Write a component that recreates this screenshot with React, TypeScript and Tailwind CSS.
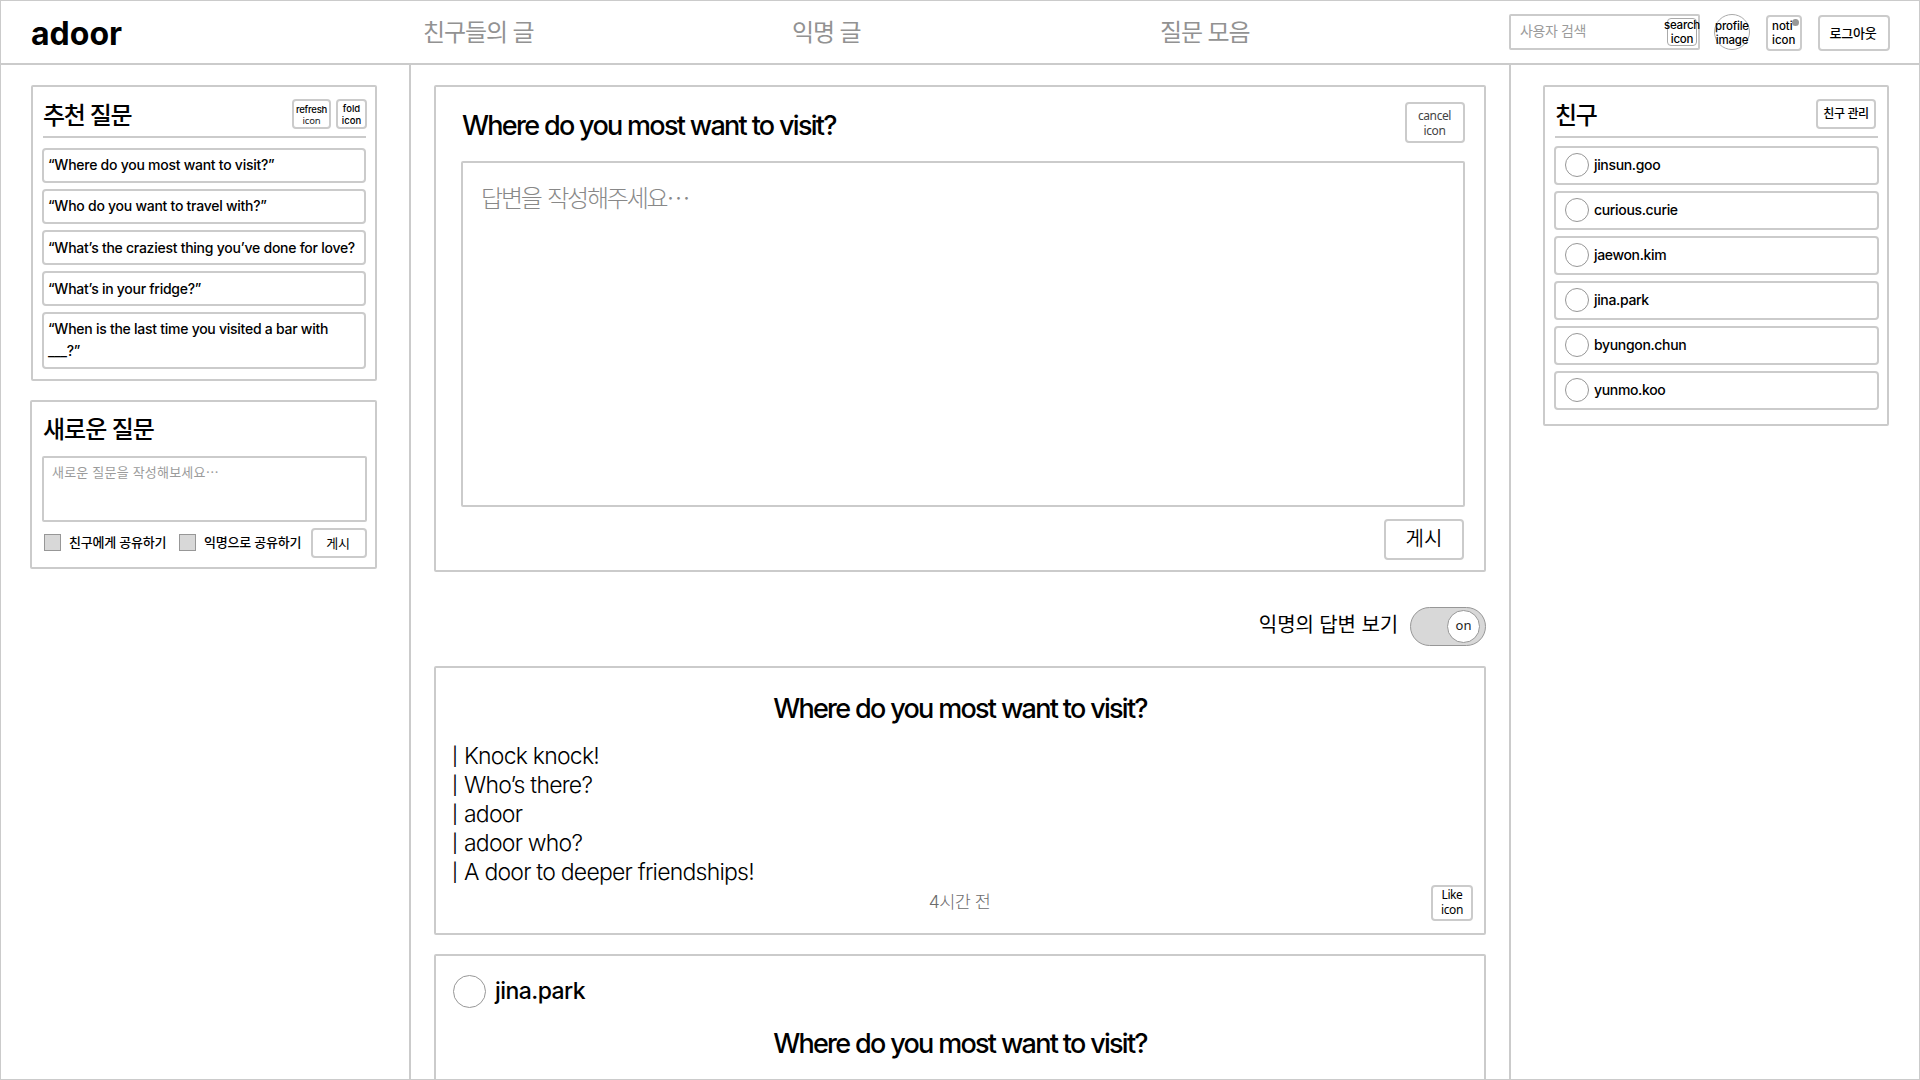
import React from "react";

const suggestions = [
  { text: "“Where do you most want to visit?”", line: "leading-[30px]" },
  { text: "“Who do you want to travel with?”", line: "leading-[30px]" },
  { text: "“What’s the craziest thing you’ve done for love?", line: "leading-[32px]" },
  { text: "“What’s in your fridge?”", line: "leading-[32px]" },
];

const friends = ["jinsun.goo", "curious.curie", "jaewon.kim", "jina.park", "byungon.chun", "yunmo.koo"];

const answerLines = ["Knock knock!", "Who’s there?", "adoor", "adoor who?", "A door to deeper friendships!"];

function QuestionTitle({ className = "" }: { className?: string }) {
  return (
    <h2 className={`whitespace-nowrap text-[27px] font-medium leading-[32px] tracking-[-1.74px] [word-spacing:0.2px] ${className}`}>
      Where do you most want to visit?
    </h2>
  );
}

function Header() {
  return (
    <header className="flex h-[65px] shrink-0 items-start border-b-2 border-[#cbcbcb] border-t border-t-[#cbcbcb]">
      <div className="ml-[30px] mt-[13px] w-[392px] text-[32px] font-bold leading-[40px] tracking-[0px]">adoor</div>
      <nav className="mt-[16px] flex text-[24px] leading-[32px] tracking-[-1.1px] text-[#929292]">
        <a className="w-[369px]">친구들의 글</a>
        <a className="w-[368px]">익명 글</a>
        <a className="w-[349px]">질문 모음</a>
      </nav>
      <div className="mt-[13px] flex h-[36px] w-[191px] rounded-[2px] border-2 border-[#cbcbcb] pl-[9px]">
        <span className="w-[147px] whitespace-nowrap text-[14px] leading-[30px] tracking-[-0.4px] text-[#9b9b9b]">사용자 검색</span>
        <button className="mt-[2px] flex h-[28px] w-[30px] shrink-0 flex-col items-center justify-center whitespace-nowrap rounded-[4px] border border-[#aaa] text-[11.5px] font-medium leading-[14px] tracking-[-0.2px]">
          <span>search</span>
          <span>icon</span>
        </button>
      </div>
      <div className="ml-[14px] mt-[13px] flex size-[36px] flex-col items-center justify-center whitespace-nowrap rounded-full border border-[#aaa] text-[11.5px] font-medium leading-[14px] tracking-[-0.2px]">
        <span className="mt-px">profile</span>
        <span>image</span>
      </div>
      <button className="relative ml-[16px] mt-[14px] flex h-[36px] w-[36px] flex-col items-start justify-center rounded-[4px] border-2 border-[#cbcbcb] pl-[4px] text-[11.5px] font-medium leading-[14px]">
        <span>noti</span>
        <span>icon</span>
        <i className="absolute right-[1px] top-[2px] size-[7px] rounded-full bg-[#979797]" />
      </button>
      <button className="ml-[16px] mt-[14px] h-[36px] w-[72px] rounded-[4px] border-2 border-[#cbcbcb] pr-[2px] text-[13px] font-medium leading-[32px] tracking-[-0.2px]">
        로그아웃
      </button>
    </header>
  );
}

function SuggestedQuestions() {
  return (
    <section className="ml-[1px] h-[296px] rounded-[2px] border-2 border-[#cbcbcb] px-[9px] pt-[12px]">
      <div className="ml-px flex h-[39px] justify-between border-b-2 border-[#cbcbcb]">
        <h2 className="mt-px text-[24px] font-medium leading-[32px] tracking-[-1.3px]">추천 질문</h2>
        <div className="-mr-px flex gap-[5px] text-[9.5px] font-medium leading-[11px]">
          <button className="flex h-[30px] w-[39px] flex-col items-center justify-center whitespace-nowrap rounded-[4px] border-2 border-[#cbcbcb] tracking-[-0.2px]">
            <span className="mt-px">refresh</span>
            <span className="font-['Noto_Sans'] font-normal text-[#222]">icon</span>
          </button>
          <button className="flex h-[30px] w-[31px] flex-col items-center rounded-[4px] border-2 border-[#cbcbcb] pt-[2px] leading-[12px]">
            <span>fold</span>
            <span>icon</span>
          </button>
        </div>
      </div>
      <ul className="mt-[10px] flex flex-col gap-[6px] text-[14px] font-medium tracking-[-0.26px]">
        {suggestions.map((q) => (
          <li key={q.text} className={`h-[35px] whitespace-nowrap rounded-[4px] border-2 border-[#cbcbcb] pl-[4px] ${q.line}`}>
            {q.text}
          </li>
        ))}
        <li className="h-[57px] whitespace-nowrap rounded-[4px] border-2 border-[#cbcbcb] pl-[4px] pt-[4px] leading-[22px]">
          “When is the last time you visited a bar with
          <br />
          ___?”
        </li>
      </ul>
    </section>
  );
}

function NewQuestion() {
  return (
    <section className="mt-[19px] h-[169px] rounded-[2px] border-2 border-[#cbcbcb] pl-[10px] pr-[8px] pt-[12px]">
      <h2 className="ml-px text-[24px] font-medium leading-[32px] tracking-[-1px]">새로운 질문</h2>
      <div className="mt-[10px] h-[66px] rounded-[2px] border-2 border-[#cbcbcb] pl-[8px] pt-[4px] text-[13px] leading-[20px] tracking-[0.2px] text-[#9b9b9b]">
        새로운 질문을 작성해보세요<span className="font-['Noto_Sans_CJK_KR']">…</span>
      </div>
      <div className="mt-[6px] flex h-[30px] items-start whitespace-nowrap pl-[2px] text-[13px] font-medium leading-[28px]">
        <i className="mr-[8px] mt-[6px] size-[17px] shrink-0 border border-[#979797] bg-[#d8d8d8]" />
        <span className="w-[110px] tracking-[-0.2px]">친구에게 공유하기</span>
        <i className="mr-[8px] mt-[6px] size-[17px] shrink-0 border border-[#979797] bg-[#d8d8d8]" />
        <span className="w-[107px] tracking-[-0.2px]">익명으로 공유하기</span>
        <button className="h-[30px] w-[56px] shrink-0 rounded-[4px] border-2 border-[#cbcbcb] pr-[2px] font-normal leading-[24px] tracking-[-0.1px]">게시</button>
      </div>
    </section>
  );
}

function Composer() {
  return (
    <section className="h-[487px] rounded-[2px] border-2 border-[#cbcbcb] pl-[25px] pr-[19px] pt-[15px]">
      <div className="flex h-[59px] justify-between">
        <QuestionTitle className="ml-px mt-[8px]" />
        <button className="flex h-[41px] w-[60px] flex-col items-center justify-center rounded-[4px] border-2 border-[#cbcbcb] pr-px font-['Noto_Sans'] text-[12px] leading-[15px] tracking-[-0.4px] text-[#444]">
          <span>cancel</span>
          <span>icon</span>
        </button>
      </div>
      <div className="h-[346px] rounded-[2px] border-2 border-[#cbcbcb] pl-[18px] pt-[18px] text-[24px] font-light leading-[32px] tracking-[-2.2px] [word-spacing:2px] text-[#888]">
        답변을 작성해주세요<span className="font-['Noto_Sans_CJK_KR']">…</span>
      </div>
      <button className="ml-auto mr-px mt-[12px] block h-[41px] w-[80px] rounded-[4px] border-2 border-[#cbcbcb] text-[20px] font-[350] leading-[35px]">게시</button>
    </section>
  );
}

function Feed() {
  return (
    <>
      <div className="mt-[35px] flex h-[39px] items-center justify-end">
        <span className="-mt-[4px] mr-[12px] text-[20px] leading-[32px] tracking-[-0.1px]">익명의 답변 보기</span>
        <div className="flex h-[39px] w-[76px] items-center justify-end rounded-full border border-[#979797] bg-[#d8d8d8] pr-[5px]">
          <div className="h-[33px] w-[33px] rounded-full border border-[#979797] bg-white text-center font-['Noto_Sans'] text-[13px] leading-[29px] text-[#222]">on</div>
        </div>
      </div>
      <article className="mt-[20px] flex h-[269px] flex-col rounded-[2px] border-2 border-[#cbcbcb] px-[18px] pt-[25px]">
        <QuestionTitle className="text-center" />
        <div className="mt-[17px] text-[23px] font-light leading-[29px] tracking-[-0.78px]">
          {answerLines.map((line) => (
            <p key={line} className="flex">
              <span className="-ml-[2px] w-[12px] text-[18px] font-normal">|</span>
              {line}
            </p>
          ))}
        </div>
        <div className="relative text-center text-[17.5px] font-light leading-[30px] tracking-[-0.5px] text-[#6c6c6c]">
          <span className="mr-px">4시간 전</span>
          <button className="absolute -right-[7px] -top-[2px] flex h-[36px] w-[42px] flex-col items-center rounded-[4px] border-2 border-[#cbcbcb] font-['Noto_Sans'] text-[12px] font-normal leading-[15px] tracking-[-0.4px] text-black">
            <span>Like</span>
            <span>icon</span>
          </button>
        </div>
      </article>
      <article className="mt-[19px] h-[300px] rounded-[2px] border-2 border-[#cbcbcb] px-[16px] pt-[18px]">
        <div className="flex h-[34px] items-center gap-[9px] pl-px text-[23px] font-medium leading-[32px] tracking-[-0.55px]">
          <i className="size-[33px] rounded-full border border-[#979797]" />
          <span>jina.park</span>
        </div>
        <QuestionTitle className="mt-[20px] text-center" />
      </article>
    </>
  );
}

function Friends() {
  return (
    <section className="h-[341px] rounded-[2px] border-2 border-[#cbcbcb] pl-[9px] pr-[8px] pt-[12px]">
      <div className="mx-px flex h-[39px] justify-between border-b-2 border-[#cbcbcb] pr-[2px]">
        <h2 className="mt-px text-[24px] font-medium leading-[32px] tracking-[-1.3px]">친구</h2>
        <button className="h-[30px] w-[60px] whitespace-nowrap rounded-[4px] border-2 border-[#cbcbcb] text-[12px] font-medium leading-[26px] tracking-[-0.4px]">친구 관리</button>
      </div>
      <ul className="mt-[8px] flex flex-col gap-[6px]">
        {friends.map((name) => (
          <li key={name} className="flex h-[39px] items-start gap-[5px] rounded-[4px] border-2 border-[#cbcbcb] pl-[9px] pt-[5px] text-[14px] font-medium leading-[24px] tracking-[-0.34px]">
            <i className="size-[24px] rounded-full border border-[#979797]" />
            {name}
          </li>
        ))}
      </ul>
    </section>
  );
}

export default function App() {
  return (
    <div className="flex h-[1080px] w-[1920px] flex-col overflow-hidden border-x border-b border-[#cbcbcb] bg-white font-['Inter','Noto_Sans_CJK_KR',sans-serif] text-black">
      <Header />
      <div className="flex min-h-0 flex-1">
        <aside className="w-[410px] border-r-2 border-[#cbcbcb] pl-[29px] pr-[32px] pt-[20px]">
          <SuggestedQuestions />
          <NewQuestion />
        </aside>
        <main className="w-[1098px] overflow-hidden px-[23px] pt-[20px]">
          <Composer />
          <Feed />
        </main>
        <aside className="flex-1 border-l-2 border-[#cbcbcb] pl-[32px] pr-[30px] pt-[20px]">
          <Friends />
        </aside>
      </div>
    </div>
  );
}
